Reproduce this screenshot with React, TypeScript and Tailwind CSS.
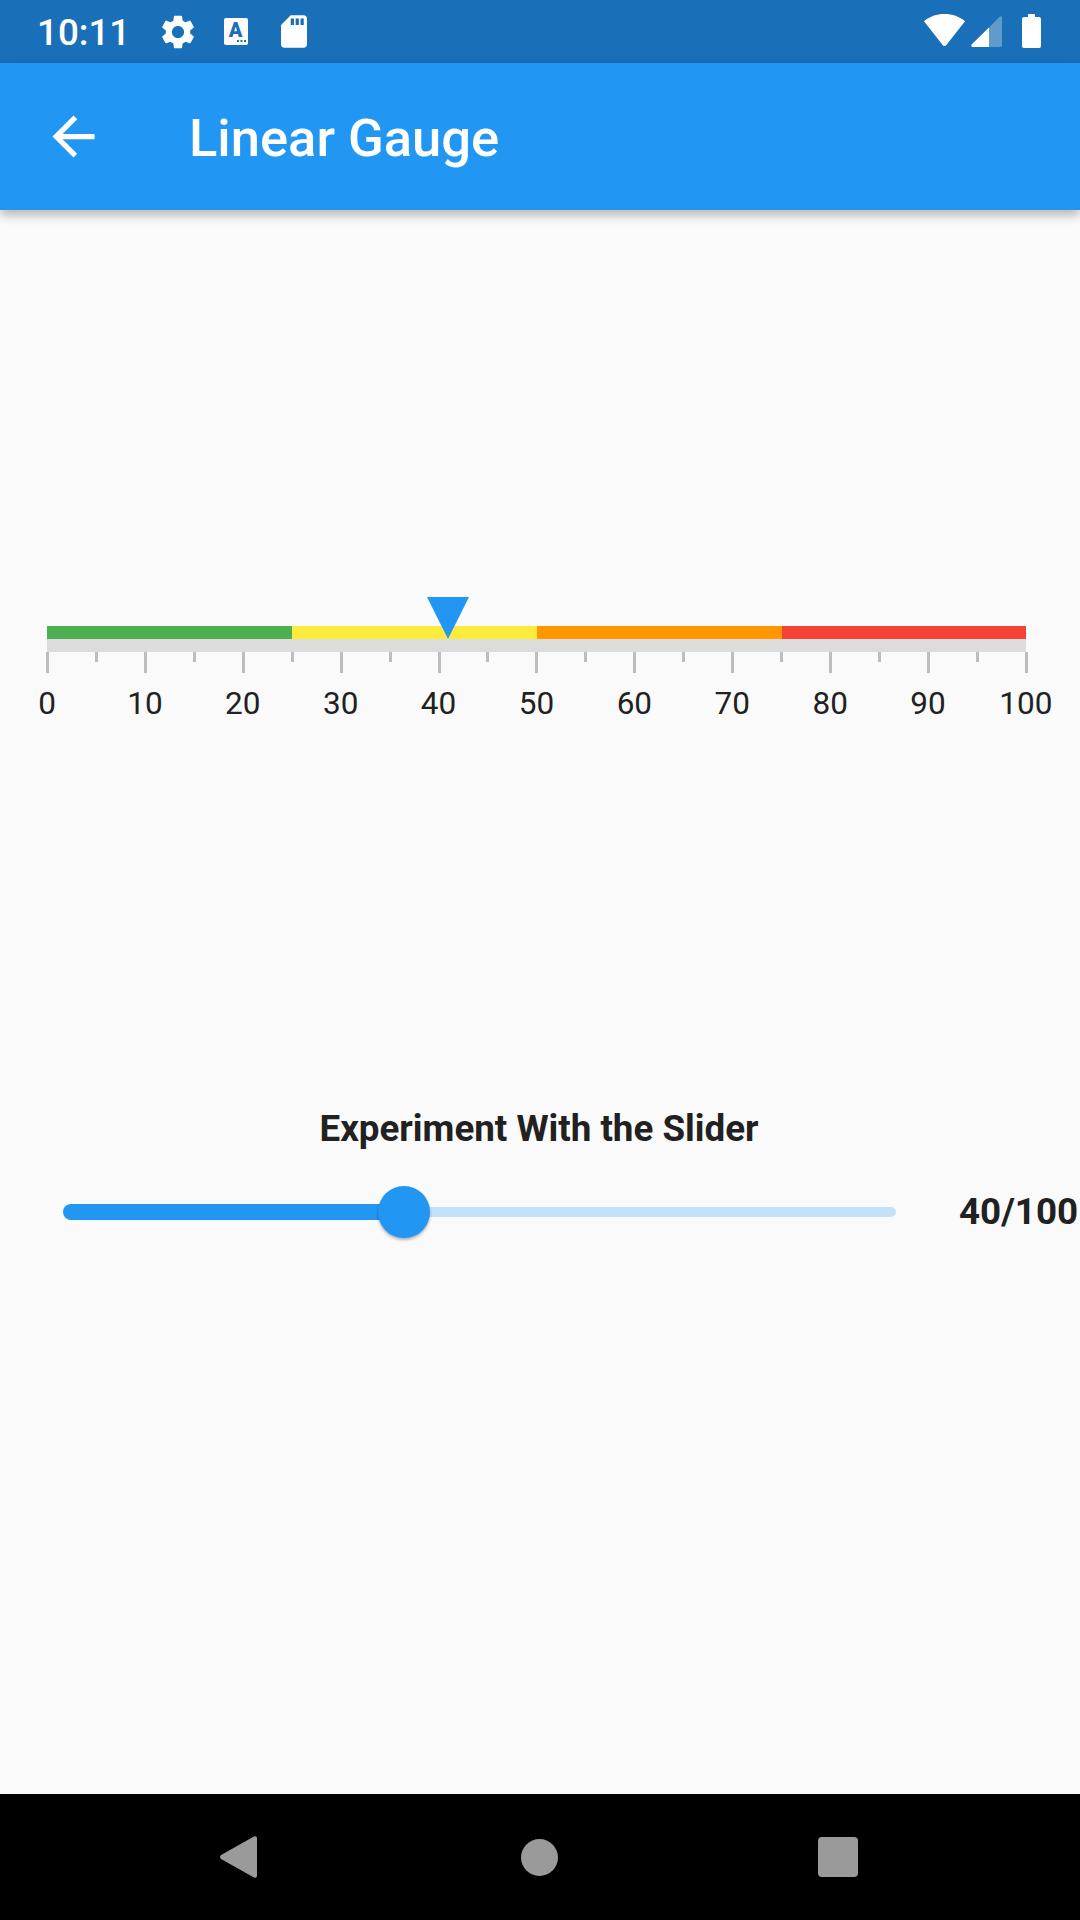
import React from 'react'

const segments = ['w-[245px] bg-[#4caf50]', 'w-[245px] bg-[#ffeb3b]', 'w-[245px] bg-[#ff9800]', 'w-[244px] bg-[#f44336]']
const ticks = Array.from({ length: 21 }, (_, i) => i * 5)
const labels = Array.from({ length: 11 }, (_, i) => i * 10)

function StatusBar() {
  return (
    <div className="h-[63px] shrink-0 bg-[#1a70b8] flex items-center pl-[37px] pr-[39px] text-white">
      <span className="text-[36.75px] font-medium leading-none w-[90px] mt-[3px] whitespace-nowrap">10:11</span>
      <svg className="ml-[35px]" width="32" height="34" viewBox="2.6 2 18.8 20" fill="#fff">
        <path d="M19.14 12.94c.04-.3.06-.61.06-.94 0-.32-.02-.64-.07-.94l2.03-1.58c.18-.14.23-.41.12-.61l-1.92-3.32c-.12-.22-.37-.29-.59-.22l-2.39.96c-.5-.38-1.03-.7-1.62-.94l-.36-2.54c-.04-.24-.24-.41-.48-.41h-3.84c-.24 0-.43.17-.47.41l-.36 2.54c-.59.24-1.13.57-1.62.94l-2.39-.96c-.22-.08-.47 0-.59.22L2.74 8.87c-.12.21-.08.47.12.61l2.03 1.58c-.05.3-.09.63-.09.94s.02.64.07.94l-2.03 1.58c-.18.14-.23.41-.12.61l1.92 3.32c.12.22.37.29.59.22l2.39-.96c.5.38 1.03.7 1.62.94l.36 2.54c.05.24.24.41.48.41h3.84c.24 0 .44-.17.47-.41l.36-2.54c.59-.24 1.13-.56 1.62-.94l2.39.96c.22.08.47 0 .59-.22l1.92-3.32c.12-.22.07-.47-.12-.61l-2.01-1.58zM12 15.6c-1.98 0-3.6-1.62-3.6-3.6s1.62-3.6 3.6-3.6 3.6 1.62 3.6 3.6-1.62 3.6-3.6 3.6z" />
      </svg>
      <svg className="ml-[30px]" width="24" height="27" viewBox="0 0 24 27">
        <rect width="24" height="27" rx="2" fill="#fff" />
        <text x="11.5" y="19" textAnchor="middle" fontFamily="Roboto" fontWeight="900" fontSize="20" fill="#1a70b8">A</text>
        <rect x="13" y="22" width="2" height="2" fill="#1a70b8" />
        <rect x="16.5" y="22" width="2" height="2" fill="#1a70b8" />
        <rect x="20" y="22" width="2" height="2" fill="#1a70b8" />
      </svg>
      <svg className="ml-[33px]" width="26" height="33" viewBox="4 2 16 20" fill="#fff">
        <path d="M18 2h-8L4.02 8 4 20c0 1.1.9 2 2 2h12c1.1 0 2-.9 2-2V4c0-1.1-.9-2-2-2zm-6 6h-2V4h2v4zm3 0h-2V4h2v4zm3 0h-2V4h2v4z" />
      </svg>
      <svg className="ml-auto -mt-[3px]" width="41" height="32" viewBox="0 0 41 32" fill="#fff">
        <path d="M20.5 0C12.5 0 5.500 2.600 0 7.200L18.600 31a2.400 2.400 0 0 0 3.800 0L41 7.200C35.500 2.600 28.500 0 20.500 0z" />
      </svg>
      <svg className="ml-[6px]" width="31" height="31" viewBox="0 0 31 31" fill="#fff">
        <path d="M18 11.500L.8 28.200C-.3 29.400.3 31 2 31h16z" />
        <path opacity="0.3" d="M18 11.500L28.400.9C29.600-.3 31 .3 31 2v27c0 1.100-.9 2-2 2H18z" />
      </svg>
      <svg className="ml-[20px] -mt-[1px]" width="19" height="34" viewBox="0 0 19 34" fill="#fff">
        <path d="M6 0h7v3h4a2 2 0 0 1 2 2v27a2 2 0 0 1-2 2H2a2 2 0 0 1-2-2V5a2 2 0 0 1 2-2h4z" />
      </svg>
    </div>
  )
}

function AppBar() {
  return (
    <div className="h-[147px] shrink-0 bg-[#2196f3] flex items-center text-white shadow-[0_5px_10px_rgba(0,0,0,0.28)] relative z-10">
      <svg className="ml-[42px]" width="63" height="63" viewBox="0 0 24 24" fill="#fff">
        <path d="M20 11H7.83l5.59-5.59L12 4l-8 8 8 8 1.41-1.41L7.83 13H20v-2z" />
      </svg>
      <h1 className="ml-[84px] mt-[3px] text-[52.5px] font-medium leading-none whitespace-nowrap">Linear Gauge</h1>
    </div>
  )
}

function Gauge() {
  return (
    <div className="mt-[416px] ml-[47px] w-[979px]">
      <div className="relative">
        <div className="flex h-[13px]">
          {segments.map((c) => (
            <div key={c} className={c} />
          ))}
        </div>
        <svg className="absolute left-[380px] -top-[29px]" width="42" height="42" viewBox="0 0 42 42" fill="#2196f3">
          <path d="M0 0h42L21 42z" />
        </svg>
      </div>
      <div className="h-[13px] bg-[#dcdcdc]" />
      <div className="flex justify-between -ml-[1px] -mr-[2px]">
        {ticks.map((t) => (
          <div key={t} className={`w-[3px] bg-[#bdbdbd] ${t % 10 === 0 ? 'h-[21px]' : 'h-[10px]'}`} />
        ))}
      </div>
      <div className="flex justify-between mt-[12px]">
        {labels.map((l) => (
          <div key={l} className="w-0 flex justify-center">
            <span className="text-[31.5px] leading-[37px] text-[#212121] whitespace-nowrap">{l}</span>
          </div>
        ))}
      </div>
    </div>
  )
}

function SliderRow() {
  return (
    <div className="mt-[385px]">
      <p className="text-center pr-[2px] text-[36.75px] font-bold leading-[43px] text-[#212121]">Experiment With the Slider</p>
      <div className="flex items-center mt-[36px] pl-[63px]">
        <div className="w-[833px] flex items-center">
          <div className="w-[341px] h-4 rounded-l-full bg-[#2196f3]" />
          <div className="w-[52px] h-[52px] -ml-[26px] rounded-full bg-[#2196f3] shadow-[0_2px_3px_rgba(0,0,0,0.3)] relative z-10 shrink-0" />
          <div className="flex-1 h-[10px] -ml-[26px] rounded-r-full bg-[#c4e1fa]" />
        </div>
        <span className="ml-[63px] text-[36.75px] font-bold leading-none text-[#212121] whitespace-nowrap">40/100</span>
      </div>
    </div>
  )
}

function NavBar() {
  return (
    <div className="h-[126px] shrink-0 bg-black flex items-center pl-[220px]">
      <svg width="37" height="42" viewBox="0 0 37 42" fill="#9a9a9a">
        <path d="M34 .6L1 19a2.600 2.600 0 0 0 0 4l33 18.400c1.400.9 3-.1 3-1.700V2.300c0-1.600-1.600-2.600-3-1.700z" />
      </svg>
      <div className="ml-[264px] w-[37px] h-[37px] rounded-full bg-[#9a9a9a]" />
      <div className="ml-[260px] w-[40px] h-[40px] rounded-[4px] bg-[#9a9a9a]" />
    </div>
  )
}

export default function App() {
  return (
    <div className="w-[1080px] h-[1920px] flex flex-col overflow-hidden bg-[#fafafa] font-['Roboto']">
      <StatusBar />
      <AppBar />
      <main className="flex-1">
        <Gauge />
        <SliderRow />
      </main>
      <NavBar />
    </div>
  )
}
